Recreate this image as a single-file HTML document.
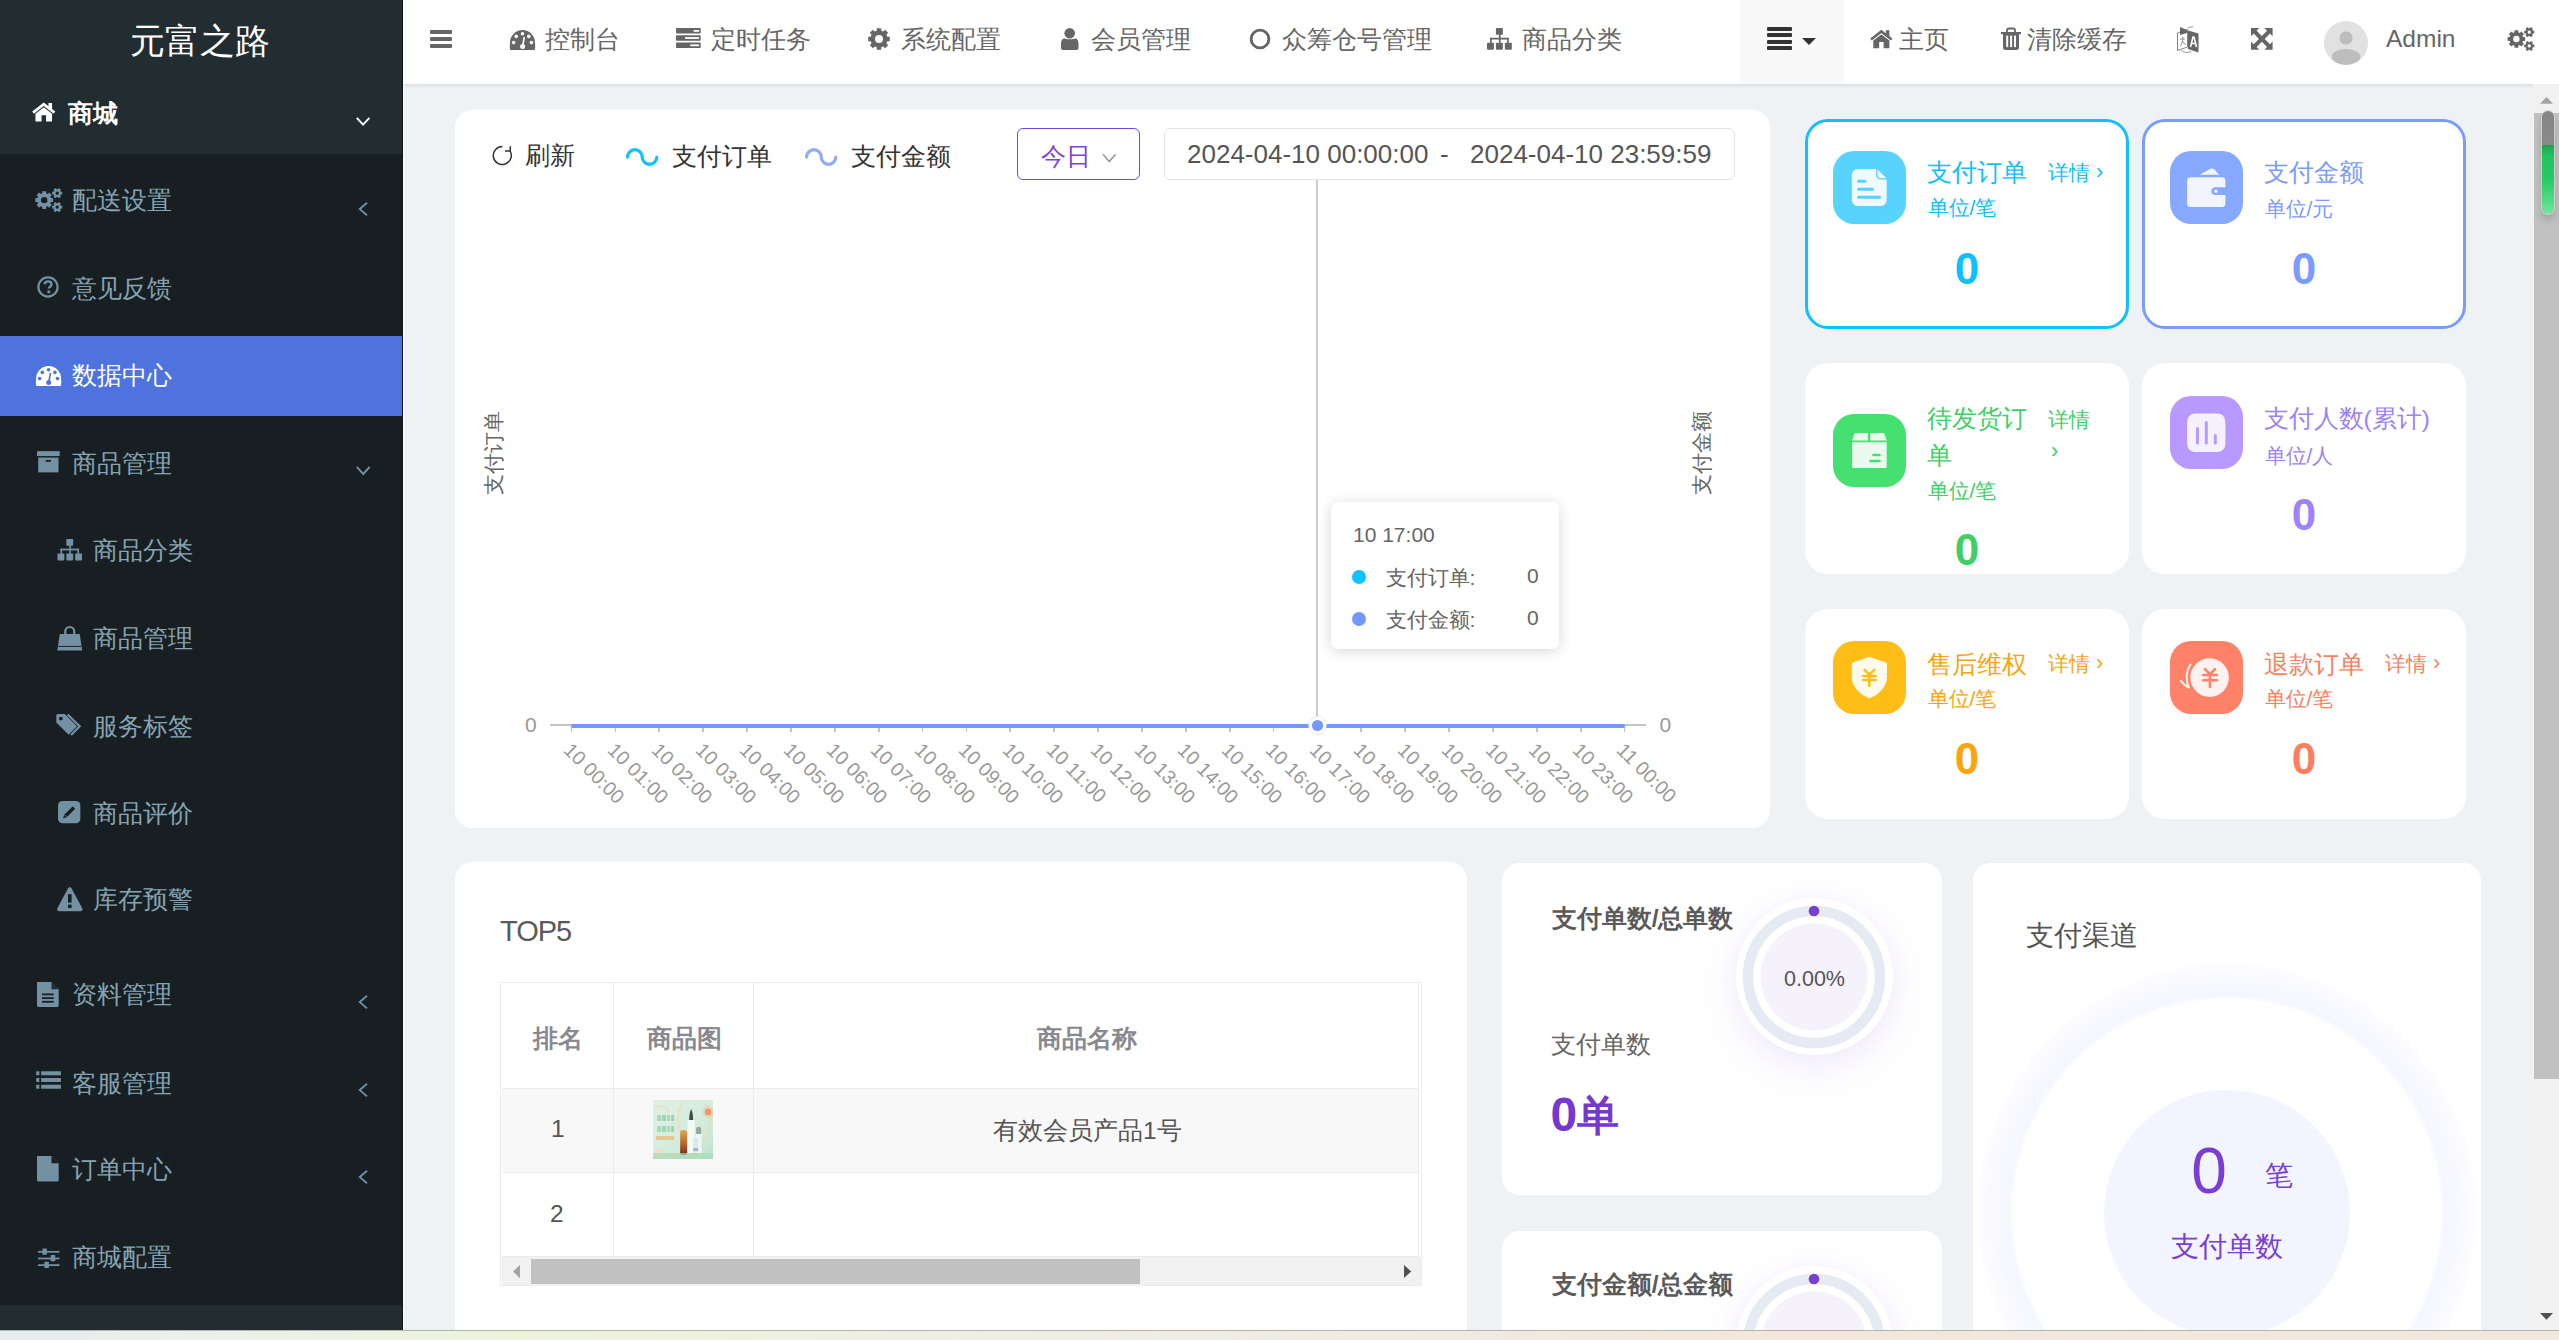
<!DOCTYPE html>
<html><head><meta charset="utf-8">
<style>
*{box-sizing:border-box;margin:0;padding:0}
html,body{width:2559px;height:1340px;overflow:hidden;background:#eef2f5;font-family:"Liberation Sans",sans-serif;position:relative}
.a{position:absolute}
.t{position:absolute;white-space:nowrap;line-height:1}
svg{position:absolute;display:block;overflow:visible}
.card{position:absolute;background:#fff}
</style></head><body>
<div class="a" style="left:0px;top:0px;width:402px;height:1330px;background:#181f23;"></div>
<div class="a" style="left:0px;top:0px;width:402px;height:154px;background:#222d32;"></div>
<div class="a" style="left:0px;top:1305px;width:402px;height:25px;background:#222d32;"></div>
<div class="a" style="left:402px;top:0px;width:1px;height:1330px;background:#0e1416;"></div>
<div class="a" style="left:403px;top:84px;width:1px;height:1246px;background:#fbfcfd;"></div>
<div class="a" style="left:0px;top:336px;width:402px;height:80px;background:#4e73df;"></div>
<div class="t" style="left:130px;top:23px;font-size:35px;color:#fff;font-weight:normal;">元富之路</div>
<div class="t" style="left:67.5px;top:102px;font-size:24.5px;color:#fff;font-weight:bold;">商城</div>
<div class="t" style="left:72.0px;top:189.2px;font-size:24.5px;color:#86a3b2;font-weight:normal;">配送设置</div>
<div class="t" style="left:72.0px;top:276.7px;font-size:24.5px;color:#86a3b2;font-weight:normal;">意见反馈</div>
<div class="t" style="left:72.0px;top:364.2px;font-size:24.5px;color:#fff;font-weight:normal;">数据中心</div>
<div class="t" style="left:72.0px;top:451.7px;font-size:24.5px;color:#86a3b2;font-weight:normal;">商品管理</div>
<div class="t" style="left:93.0px;top:539.2px;font-size:24.5px;color:#86a3b2;font-weight:normal;">商品分类</div>
<div class="t" style="left:93.0px;top:626.7px;font-size:24.5px;color:#86a3b2;font-weight:normal;">商品管理</div>
<div class="t" style="left:93.0px;top:714.7px;font-size:24.5px;color:#86a3b2;font-weight:normal;">服务标签</div>
<div class="t" style="left:93.0px;top:801.7px;font-size:24.5px;color:#86a3b2;font-weight:normal;">商品评价</div>
<div class="t" style="left:93.0px;top:888.2px;font-size:24.5px;color:#86a3b2;font-weight:normal;">库存预警</div>
<div class="t" style="left:72.0px;top:982.7px;font-size:24.5px;color:#86a3b2;font-weight:normal;">资料管理</div>
<div class="t" style="left:72.0px;top:1071.7px;font-size:24.5px;color:#86a3b2;font-weight:normal;">客服管理</div>
<div class="t" style="left:72.0px;top:1158.2px;font-size:24.5px;color:#86a3b2;font-weight:normal;">订单中心</div>
<div class="t" style="left:72.0px;top:1246.2px;font-size:24.5px;color:#86a3b2;font-weight:normal;">商城配置</div>
<svg style="left:31.5px;top:102.5px;" width="23.5" height="18.6" viewBox="0 0 22.7 18"><path d="M1 9.3 L11.35 1.2 L21.7 9.3" fill="none" stroke="#fff" stroke-width="2.6" stroke-linejoin="miter"/><rect x="15.9" y="0" width="3.5" height="6.5" fill="#fff"/><path fill="#fff" d="M3.3 10.3 L11.35 4.2 L19.4 10.3 V18 H13.6 V11.9 H9.2 V18 H3.3Z"/></svg>
<svg style="left:34.8px;top:188px;" width="27.4" height="24.4" viewBox="0 0 28 25"><path fill="#7391a3" fill-rule="evenodd" d="M16.31 10.37 L18.50 10.49 L18.50 14.31 L16.31 14.43 L15.72 15.85 L17.19 17.48 L14.48 20.19 L12.85 18.72 L11.43 19.31 L11.31 21.50 L7.49 21.50 L7.37 19.31 L5.95 18.72 L4.32 20.19 L1.61 17.48 L3.08 15.85 L2.49 14.43 L0.30 14.31 L0.30 10.49 L2.49 10.37 L3.08 8.95 L1.61 7.32 L4.32 4.61 L5.95 6.08 L7.37 5.49 L7.49 3.30 L11.31 3.30 L11.43 5.49 L12.85 6.08 L14.48 4.61 L17.19 7.32 L15.72 8.95ZM12.70 12.40A3.30 3.30 0 1 0 6.10 12.40A3.30 3.30 0 1 0 12.70 12.40Z"/><path fill="#7391a3" fill-rule="evenodd" d="M26.45 3.90 L27.92 3.91 L27.92 6.69 L26.45 6.70 L25.78 7.85 L26.51 9.13 L24.11 10.51 L23.36 9.24 L22.04 9.24 L21.29 10.51 L18.89 9.13 L19.62 7.85 L18.95 6.70 L17.48 6.69 L17.48 3.91 L18.95 3.90 L19.62 2.75 L18.89 1.47 L21.29 0.09 L22.04 1.36 L23.36 1.36 L24.11 0.09 L26.51 1.47 L25.78 2.75ZM24.40 5.30A1.70 1.70 0 1 0 21.00 5.30A1.70 1.70 0 1 0 24.40 5.30Z"/><path fill="#7391a3" fill-rule="evenodd" d="M26.45 18.20 L27.92 18.21 L27.92 20.99 L26.45 21.00 L25.78 22.15 L26.51 23.43 L24.11 24.81 L23.36 23.54 L22.04 23.54 L21.29 24.81 L18.89 23.43 L19.62 22.15 L18.95 21.00 L17.48 20.99 L17.48 18.21 L18.95 18.20 L19.62 17.05 L18.89 15.77 L21.29 14.39 L22.04 15.66 L23.36 15.66 L24.11 14.39 L26.51 15.77 L25.78 17.05ZM24.40 19.60A1.70 1.70 0 1 0 21.00 19.60A1.70 1.70 0 1 0 24.40 19.60Z"/></svg>
<svg style="left:37.2px;top:276px;" width="22" height="22" viewBox="0 0 22 22"><circle cx="11" cy="11" r="9.6" fill="none" stroke="#7391a3" stroke-width="2.2"/><path d="M7.6 8.4 C7.8 6.4 9.2 5.4 11.1 5.4 C13.1 5.4 14.5 6.6 14.5 8.3 C14.5 10.6 11.9 10.8 11.9 12.6" fill="none" stroke="#7391a3" stroke-width="2.4"/><rect x="10.4" y="14.4" width="2.8" height="2.8" fill="#7391a3"/></svg>
<svg style="left:35.8px;top:366px;" width="25.2" height="20" viewBox="0 0 25 20"><path fill="#fff" d="M0.3 20 C-0.6 17.5 0 14 0 12.5 A12.5 12.5 0 0 1 25 12.5 C25 14 25.6 17.5 24.7 20Z"/><circle cx="12.5" cy="3.8" r="1.8" fill="#4e73df"/><circle cx="6.2" cy="6.4" r="1.8" fill="#4e73df"/><circle cx="18.8" cy="6.4" r="1.8" fill="#4e73df"/><circle cx="3.6" cy="12.6" r="1.8" fill="#4e73df"/><circle cx="21.4" cy="12.6" r="1.8" fill="#4e73df"/><path d="M14.3 7 L12.9 15" stroke="#4e73df" stroke-width="1.6"/><circle cx="12.6" cy="16.4" r="2.5" fill="#4e73df"/></svg>
<svg style="left:36.7px;top:451px;" width="22.7" height="21.5" viewBox="0 0 23 21.5"><rect x="0" y="0" width="23" height="5" fill="#7391a3"/><rect x="1.2" y="6.5" width="20.6" height="15" fill="#7391a3"/><rect x="8.8" y="9" width="5.4" height="1.8" fill="#181f23"/></svg>
<svg style="left:56.5px;top:539.4px;" width="25.5" height="21.4" viewBox="0 0 25 21.8"><rect x="9" y="0" width="7" height="6.8" rx="0.8" fill="#7391a3"/><rect x="12" y="6" width="1.7" height="9" fill="#7391a3"/><rect x="3" y="9.8" width="19" height="1.8" fill="#7391a3"/><rect x="3" y="10" width="1.7" height="5" fill="#7391a3"/><rect x="20.3" y="10" width="1.7" height="5" fill="#7391a3"/><rect x="0" y="14.8" width="7" height="7" rx="0.8" fill="#7391a3"/><rect x="9" y="14.8" width="7" height="7" rx="0.8" fill="#7391a3"/><rect x="18" y="14.8" width="7" height="7" rx="0.8" fill="#7391a3"/></svg>
<svg style="left:56.5px;top:624.6px;" width="25.5" height="25.4" viewBox="0 0 25 25.5"><path d="M8 10 V6.5 A4.5 4.5 0 0 1 17 6.5 V10" fill="none" stroke="#7391a3" stroke-width="2.2"/><path fill="#7391a3" d="M2.5 9 H22.5 L25 25.5 H0Z"/><path d="M1 21.5 H24" stroke="#1a2226" stroke-width="1"/></svg>
<svg style="left:55.8px;top:714px;" width="26.8" height="21.7" viewBox="0 0 26.5 22"><path fill="#7391a3" d="M0 1.2 V8.5 L12.5 21 L21 12.5 L8.5 0 H1.2Z"/><circle cx="4.6" cy="4.6" r="1.9" fill="#181f23"/><path d="M11.5 0.5 L23.7 12.5 L15 21.2" fill="none" stroke="#7391a3" stroke-width="2.2"/></svg>
<svg style="left:57.9px;top:800.7px;" width="22.4" height="22.3" viewBox="0 0 22.4 22.4"><rect x="0" y="0" width="22.4" height="22.4" rx="4.5" fill="#7391a3"/><path d="M5 17.5 L6.2 13.8 L14.8 5.2 L17.3 7.7 L8.7 16.3Z" fill="#181f23"/><path d="M6.8 14.2 L8.3 15.7" stroke="#7391a3" stroke-width="0.9"/></svg>
<svg style="left:56.5px;top:887px;" width="25.6" height="24.3" viewBox="0 0 25.6 24"><path fill="#7391a3" d="M12.8 0 C13.6 0 14.1 0.5 14.5 1.2 L25.4 21.4 C25.9 22.6 25.2 24 23.8 24 H1.8 C0.4 24 -0.3 22.6 0.2 21.4 L11.1 1.2 C11.5 0.5 12 0 12.8 0Z"/><rect x="11" y="7" width="3.6" height="8.5" fill="#181f23"/><rect x="11" y="17.5" width="3.6" height="3.4" fill="#181f23"/></svg>
<svg style="left:37.2px;top:981.5px;" width="21.7" height="25" viewBox="0 0 21.7 25"><path fill="#7391a3" d="M1 0 H14.5 L21.7 7.2 V23.6 C21.7 24.4 21.1 25 20.3 25 H1.4 C0.6 25 0 24.4 0 23.6 V1 C0 0.4 0.4 0 1 0Z"/><path fill="#181f23" d="M14.5 0 V7.2 H21.7Z" opacity="0.9"/><rect x="5" y="11.5" width="11.7" height="1.8" fill="#181f23"/><rect x="5" y="15.2" width="11.7" height="1.8" fill="#181f23"/><rect x="5" y="18.9" width="11.7" height="1.8" fill="#181f23"/></svg>
<svg style="left:35.8px;top:1071px;" width="25.2" height="20.3" viewBox="0 0 25 20.5"><rect x="0" y="0.3" width="3.2" height="4" fill="#7391a3"/><rect x="5" y="0.3" width="20" height="4" fill="#7391a3"/><rect x="0" y="7.1" width="3.2" height="4" fill="#7391a3"/><rect x="5" y="7.1" width="20" height="4" fill="#7391a3"/><rect x="0" y="13.9" width="3.2" height="4" fill="#7391a3"/><rect x="5" y="13.9" width="20" height="4" fill="#7391a3"/><rect x="0" y="3.1" width="3.2" height="0.8" fill="#7391a3" opacity="0"/></svg>
<svg style="left:37.2px;top:1156px;" width="21.7" height="25.5" viewBox="0 0 21.7 25.4"><path fill="#7391a3" d="M1 0 H14.5 L21.7 7.2 V24 C21.7 24.8 21.1 25.4 20.3 25.4 H1.4 C0.6 25.4 0 24.8 0 24 V1 C0 0.4 0.4 0 1 0Z"/><path fill="#181f23" d="M14.5 0 V7.2 H21.7Z"/></svg>
<svg style="left:37.5px;top:1247.6px;" width="21.5" height="20.4" viewBox="0 0 22 20"><rect x="0" y="2.6" width="22" height="1.8" fill="#7391a3"/><rect x="0" y="9.4" width="22" height="1.8" fill="#7391a3"/><rect x="0" y="16.2" width="22" height="1.8" fill="#7391a3"/><rect x="4.5" y="0" width="4.6" height="6.4" rx="0.6" fill="#7391a3"/><rect x="13" y="6.8" width="4.6" height="6.4" rx="0.6" fill="#7391a3"/><rect x="6.5" y="13.6" width="4.6" height="6.4" rx="0.6" fill="#7391a3"/></svg>
<svg style="left:354.8px;top:115.5px;" width="16.2" height="10.5" viewBox="-1 -1 16.2 10.5"><path d="M0.8 0.8 L7.1 7.7 L13.399999999999999 0.8" fill="none" stroke="#fff" stroke-width="1.9"/></svg>
<svg style="left:355px;top:465px;" width="16.5" height="10.8" viewBox="-1 -1 16.5 10.8"><path d="M0.8 0.8 L7.25 8.0 L13.7 0.8" fill="none" stroke="#7391a3" stroke-width="1.9"/></svg>
<svg style="left:358.2px;top:200.8px;" width="10.8" height="16.2" viewBox="-1 -1 10.8 16.2"><path d="M8.0 0.8 L0.8 7.1 L8.0 13.399999999999999" fill="none" stroke="#7391a3" stroke-width="1.9"/></svg>
<svg style="left:358.2px;top:994px;" width="10.8" height="16.2" viewBox="-1 -1 10.8 16.2"><path d="M8.0 0.8 L0.8 7.1 L8.0 13.399999999999999" fill="none" stroke="#7391a3" stroke-width="1.9"/></svg>
<svg style="left:358.2px;top:1082.2px;" width="10.8" height="16.2" viewBox="-1 -1 10.8 16.2"><path d="M8.0 0.8 L0.8 7.1 L8.0 13.399999999999999" fill="none" stroke="#7391a3" stroke-width="1.9"/></svg>
<svg style="left:358.2px;top:1169px;" width="10.8" height="16.2" viewBox="-1 -1 10.8 16.2"><path d="M8.0 0.8 L0.8 7.1 L8.0 13.399999999999999" fill="none" stroke="#7391a3" stroke-width="1.9"/></svg>
<div class="a" style="left:403px;top:0;width:2156px;height:84px;background:#fff;box-shadow:0 1px 4px rgba(0,0,0,.13)"></div>
<div class="a" style="left:1740px;top:0px;width:104px;height:84px;background:#f8f8f8;"></div>
<div class="t" style="left:545px;top:28px;font-size:24.5px;color:#666;font-weight:normal;">控制台</div>
<div class="t" style="left:711px;top:28px;font-size:24.5px;color:#666;font-weight:normal;">定时任务</div>
<div class="t" style="left:901px;top:28px;font-size:24.5px;color:#666;font-weight:normal;">系统配置</div>
<div class="t" style="left:1091px;top:28px;font-size:24.5px;color:#666;font-weight:normal;">会员管理</div>
<div class="t" style="left:1282px;top:28px;font-size:24.5px;color:#666;font-weight:normal;">众筹仓号管理</div>
<div class="t" style="left:1522px;top:28px;font-size:24.5px;color:#666;font-weight:normal;">商品分类</div>
<div class="t" style="left:1899px;top:28px;font-size:24.5px;color:#666;font-weight:normal;">主页</div>
<div class="t" style="left:2027px;top:28px;font-size:24.5px;color:#666;font-weight:normal;">清除缓存</div>
<div class="t" style="left:2386px;top:27px;font-size:24.5px;color:#666;font-weight:normal;">Admin</div>
<div class="a" style="left:430px;top:30px;width:22px;height:4px;background:#666;border-radius:1px"></div>
<div class="a" style="left:430px;top:37px;width:22px;height:4px;background:#666;border-radius:1px"></div>
<div class="a" style="left:430px;top:44px;width:22px;height:4px;background:#666;border-radius:1px"></div>
<svg style="left:510px;top:30px;" width="25" height="20" viewBox="0 0 25 20"><path fill="#666" d="M0.3 20 C-0.6 17.5 0 14 0 12.5 A12.5 12.5 0 0 1 25 12.5 C25 14 25.6 17.5 24.7 20Z"/><circle cx="12.5" cy="3.8" r="1.8" fill="#fff"/><circle cx="6.2" cy="6.4" r="1.8" fill="#fff"/><circle cx="18.8" cy="6.4" r="1.8" fill="#fff"/><circle cx="3.6" cy="12.6" r="1.8" fill="#fff"/><circle cx="21.4" cy="12.6" r="1.8" fill="#fff"/><path d="M14.3 7 L12.9 15" stroke="#fff" stroke-width="1.6"/><circle cx="12.6" cy="16.4" r="2.5" fill="#fff"/></svg>
<svg style="left:676px;top:28px;" width="24.7" height="20" viewBox="0 0 24.7 20"><rect x="0" y="0" width="24.7" height="5.6" rx="0.8" fill="#666"/><rect x="17.7" y="2" width="5.4" height="1.8" fill="#fff"/><rect x="0" y="7.2" width="24.7" height="5.6" rx="0.8" fill="#666"/><rect x="9" y="9.1" width="14.1" height="1.8" fill="#fff"/><rect x="0" y="14.4" width="24.7" height="5.6" rx="0.8" fill="#666"/><rect x="14.3" y="16.4" width="8.8" height="1.8" fill="#fff"/></svg>
<svg style="left:868px;top:28px;" width="22" height="22" viewBox="0 0 22 22"><path fill="#666" fill-rule="evenodd" d="M19.29 8.72 L21.79 8.87 L21.79 13.13 L19.29 13.28 L18.47 15.26 L20.14 17.13 L17.13 20.14 L15.26 18.47 L13.28 19.29 L13.13 21.79 L8.87 21.79 L8.72 19.29 L6.74 18.47 L4.87 20.14 L1.86 17.13 L3.53 15.26 L2.71 13.28 L0.21 13.13 L0.21 8.87 L2.71 8.72 L3.53 6.74 L1.86 4.87 L4.87 1.86 L6.74 3.53 L8.72 2.71 L8.87 0.21 L13.13 0.21 L13.28 2.71 L15.26 3.53 L17.13 1.86 L20.14 4.87 L18.47 6.74ZM15.00 11.00A4.00 4.00 0 1 0 7.00 11.00A4.00 4.00 0 1 0 15.00 11.00Z"/></svg>
<svg style="left:1061px;top:28px;" width="17.5" height="22" viewBox="0 0 17.5 22"><circle cx="8.7" cy="5.3" r="5.3" fill="#666"/><path fill="#666" d="M3.2 10.2 C5 11.6 12.5 11.6 14.3 10.2 C16.6 10.6 17.5 13 17.5 16 V20 C17.5 21.2 16.7 22 15.5 22 H2 C0.8 22 0 21.2 0 20 V16 C0 13 0.9 10.6 3.2 10.2Z"/></svg>
<svg style="left:1249px;top:28px;" width="22" height="22" viewBox="0 0 22 22"><circle cx="11" cy="11" r="8.9" fill="none" stroke="#666" stroke-width="2.9"/></svg>
<svg style="left:1487.2px;top:28.2px;" width="24.8" height="21.7" viewBox="0 0 25 21.8"><rect x="9" y="0" width="7" height="6.8" rx="0.8" fill="#666"/><rect x="12" y="6" width="1.7" height="9" fill="#666"/><rect x="3" y="9.8" width="19" height="1.8" fill="#666"/><rect x="3" y="10" width="1.7" height="5" fill="#666"/><rect x="20.3" y="10" width="1.7" height="5" fill="#666"/><rect x="0" y="14.8" width="7" height="7" rx="0.8" fill="#666"/><rect x="9" y="14.8" width="7" height="7" rx="0.8" fill="#666"/><rect x="18" y="14.8" width="7" height="7" rx="0.8" fill="#666"/></svg>
<div class="a" style="left:1766.8px;top:27px;width:25.2px;height:4px;background:#333;border-radius:1px"></div>
<div class="a" style="left:1766.8px;top:33.3px;width:25.2px;height:4px;background:#333;border-radius:1px"></div>
<div class="a" style="left:1766.8px;top:39.6px;width:25.2px;height:4px;background:#333;border-radius:1px"></div>
<div class="a" style="left:1766.8px;top:45.9px;width:25.2px;height:4px;background:#333;border-radius:1px"></div>
<svg style="left:1802px;top:38px;" width="14" height="7" viewBox="0 0 14 7"><path d="M0 0 H14 L7 7Z" fill="#333"/></svg>
<svg style="left:1870px;top:29.5px;" width="22.7" height="18.4" viewBox="0 0 22.7 18"><path d="M1 9.3 L11.35 1.2 L21.7 9.3" fill="none" stroke="#666" stroke-width="2.6" stroke-linejoin="miter"/><rect x="15.9" y="0" width="3.5" height="6.5" fill="#666"/><path fill="#666" d="M3.3 10.3 L11.35 4.2 L19.4 10.3 V18 H13.6 V11.9 H9.2 V18 H3.3Z"/></svg>
<svg style="left:2000.6px;top:28px;" width="20" height="22" viewBox="0 0 20 22"><path d="M6 4 V2.2 C6 1.2 6.8 0.5 7.8 0.5 H12.2 C13.2 0.5 14 1.2 14 2.2 V4" fill="none" stroke="#666" stroke-width="1.8"/><rect x="0" y="4" width="20" height="2.2" fill="#666"/><path fill="#666" d="M2 6 H18 V19.5 C18 21 17 22 15.5 22 H4.5 C3 22 2 21 2 19.5Z"/><rect x="5.2" y="7.6" width="2" height="11.5" fill="#fff"/><rect x="9.1" y="7.6" width="2" height="11.5" fill="#fff"/><rect x="13" y="7.6" width="2" height="11.5" fill="#fff"/></svg>
<svg style="left:2177px;top:26px;" width="22" height="26" viewBox="0 0 22 26"><path d="M0.5 7 L10.5 3.5 V21 L0.5 24.5Z" fill="none" stroke="#666" stroke-width="0.8"/><path d="M3 1 L10 4 L10 7 L3 9Z" fill="#666"/><path d="M11 4.5 L21.5 7.5 V26.5 L11 23Z" fill="#666"/><path d="M13.5 21 L16 11 H17 L19.5 21 M14.6 17.5 H18.4" stroke="#fff" stroke-width="1.6" fill="none"/><path d="M3 13 H8 M6 11 C6 15 5 18 3 20 M5 15 C6 17 8 18 9 18.5" stroke="#666" stroke-width="0.7" fill="none"/><path d="M4.5 24.5 C7 27 12 27 14 25" stroke="#666" stroke-width="0.7" fill="none"/><path d="M11 2 C13 1 15 0.8 16.5 1" stroke="#666" stroke-width="0.7" fill="none"/></svg>
<svg style="left:2251px;top:28.2px;" width="21.6" height="21.8" viewBox="0 0 21.6 21.8"><path fill="#666" d="M0 0 H8.3 L5.6 2.7 L10.8 7.9 L16 2.7 L13.3 0 H21.6 V8.3 L18.9 5.6 L13.7 10.9 L18.9 16.2 L21.6 13.5 V21.8 H13.3 L16 19.1 L10.8 13.8 L5.6 19.1 L8.3 21.8 H0 V13.5 L2.7 16.2 L7.9 10.9 L2.7 5.6 L0 8.3Z"/></svg>
<svg style="left:2324px;top:20.5px;" width="44" height="44" viewBox="0 0 44 44"><defs><clipPath id="avc"><circle cx="22" cy="22" r="22"/></clipPath></defs><circle cx="22" cy="22" r="22" fill="#e1e1e1"/><circle cx="22" cy="17" r="6.6" fill="#bdbdbd"/><ellipse cx="22" cy="36" rx="14.3" ry="8" fill="#bdbdbd" clip-path="url(#avc)"/></svg>
<svg style="left:2507px;top:27px;" width="27.7" height="24.2" viewBox="0 0 28 25"><path fill="#666" fill-rule="evenodd" d="M16.31 10.37 L18.50 10.49 L18.50 14.31 L16.31 14.43 L15.72 15.85 L17.19 17.48 L14.48 20.19 L12.85 18.72 L11.43 19.31 L11.31 21.50 L7.49 21.50 L7.37 19.31 L5.95 18.72 L4.32 20.19 L1.61 17.48 L3.08 15.85 L2.49 14.43 L0.30 14.31 L0.30 10.49 L2.49 10.37 L3.08 8.95 L1.61 7.32 L4.32 4.61 L5.95 6.08 L7.37 5.49 L7.49 3.30 L11.31 3.30 L11.43 5.49 L12.85 6.08 L14.48 4.61 L17.19 7.32 L15.72 8.95ZM12.70 12.40A3.30 3.30 0 1 0 6.10 12.40A3.30 3.30 0 1 0 12.70 12.40Z"/><path fill="#666" fill-rule="evenodd" d="M26.45 3.90 L27.92 3.91 L27.92 6.69 L26.45 6.70 L25.78 7.85 L26.51 9.13 L24.11 10.51 L23.36 9.24 L22.04 9.24 L21.29 10.51 L18.89 9.13 L19.62 7.85 L18.95 6.70 L17.48 6.69 L17.48 3.91 L18.95 3.90 L19.62 2.75 L18.89 1.47 L21.29 0.09 L22.04 1.36 L23.36 1.36 L24.11 0.09 L26.51 1.47 L25.78 2.75ZM24.40 5.30A1.70 1.70 0 1 0 21.00 5.30A1.70 1.70 0 1 0 24.40 5.30Z"/><path fill="#666" fill-rule="evenodd" d="M26.45 18.20 L27.92 18.21 L27.92 20.99 L26.45 21.00 L25.78 22.15 L26.51 23.43 L24.11 24.81 L23.36 23.54 L22.04 23.54 L21.29 24.81 L18.89 23.43 L19.62 22.15 L18.95 21.00 L17.48 20.99 L17.48 18.21 L18.95 18.20 L19.62 17.05 L18.89 15.77 L21.29 14.39 L22.04 15.66 L23.36 15.66 L24.11 14.39 L26.51 15.77 L25.78 17.05ZM24.40 19.60A1.70 1.70 0 1 0 21.00 19.60A1.70 1.70 0 1 0 24.40 19.60Z"/></svg>
<div class="card" style="left:455px;top:110px;width:1315px;height:718px;border-radius:18px"></div>
<svg style="left:492.9px;top:145.5px;" width="20" height="20" viewBox="0 0 20 20"><path d="M9.3 0.5 A9 9 0 1 0 17.1 5" fill="none" stroke="#333" stroke-width="1.5"/><path d="M12 5.1 H17.3 V0.3" fill="none" stroke="#333" stroke-width="1.5"/></svg>
<div class="t" style="left:525px;top:143.5px;font-size:24.5px;color:#333;font-weight:normal;">刷新</div>
<svg style="left:625.7px;top:147px;" width="32.5" height="19" viewBox="0 0 32.5 19"><path d="M1.6 10 A7.3 7.3 0 0 1 16.2 10 A7.3 7.3 0 0 0 30.8 10" fill="none" stroke="#0fc3ff" stroke-width="3.2" stroke-linecap="round"/></svg>
<div class="t" style="left:672px;top:144.5px;font-size:24.5px;color:#333;font-weight:normal;">支付订单</div>
<svg style="left:805px;top:147px;" width="32.5" height="19" viewBox="0 0 32.5 19"><path d="M1.6 10 A7.3 7.3 0 0 1 16.2 10 A7.3 7.3 0 0 0 30.8 10" fill="none" stroke="#8eaaff" stroke-width="3.2" stroke-linecap="round"/></svg>
<div class="t" style="left:851.4px;top:144.5px;font-size:24.5px;color:#333;font-weight:normal;">支付金额</div>
<div class="a" style="left:1017px;top:128px;width:123px;height:52px;border:1.6px solid #7b45d6;border-radius:6px;background:#fff"></div>
<div class="t" style="left:1040.6px;top:145px;font-size:24.5px;color:#7b45d6;font-weight:normal;">今日</div>
<svg style="left:1101.6px;top:152.5px;" width="14.5" height="10" viewBox="0 0 14.5 10"><path d="M1 1.2 L7.25 8.5 L13.5 1.2" fill="none" stroke="#999" stroke-width="1.6"/></svg>
<div class="a" style="left:1164px;top:128px;width:571px;height:52px;border:1.6px solid #e1e3ea;border-radius:6px;background:#fff"></div>
<div class="t" style="left:1187px;top:140.7px;font-size:26px;color:#555;font-weight:normal;">2024-04-10 00:00:00</div>
<div class="t" style="left:1440px;top:140.7px;font-size:26px;color:#555;font-weight:normal;">-</div>
<div class="t" style="left:1470px;top:140.7px;font-size:26px;color:#555;font-weight:normal;">2024-04-10 23:59:59</div>
<div class="t" style="left:493px;top:453px;font-size:21px;color:#666;transform:translate(-50%,-50%) rotate(-90deg)">支付订单</div>
<div class="t" style="left:1701px;top:453px;font-size:21px;color:#666;transform:translate(-50%,-50%) rotate(-90deg)">支付金额</div>
<div class="t" style="left:525px;top:713.5px;font-size:21px;color:#999;font-weight:normal;">0</div>
<div class="t" style="left:1659.5px;top:713.5px;font-size:21px;color:#999;font-weight:normal;">0</div>
<div class="a" style="left:1316.2px;top:180px;width:1.8px;height:545px;background:#cccccc;"></div>
<div class="a" style="left:550px;top:724px;width:1096px;height:1.8px;background:#c4c4c4;"></div>
<div class="a" style="left:570.7px;top:725px;width:1.8px;height:7px;background:#c4c4c4;"></div>
<div class="t" style="left:567.1px;top:737px;font-size:19.5px;color:#999;transform-origin:0 50%;transform:rotate(45deg)">10 00:00</div>
<div class="a" style="left:614.575px;top:725px;width:1.8px;height:7px;background:#c4c4c4;"></div>
<div class="t" style="left:611.0px;top:737px;font-size:19.5px;color:#999;transform-origin:0 50%;transform:rotate(45deg)">10 01:00</div>
<div class="a" style="left:658.45px;top:725px;width:1.8px;height:7px;background:#c4c4c4;"></div>
<div class="t" style="left:654.9px;top:737px;font-size:19.5px;color:#999;transform-origin:0 50%;transform:rotate(45deg)">10 02:00</div>
<div class="a" style="left:702.325px;top:725px;width:1.8px;height:7px;background:#c4c4c4;"></div>
<div class="t" style="left:698.7px;top:737px;font-size:19.5px;color:#999;transform-origin:0 50%;transform:rotate(45deg)">10 03:00</div>
<div class="a" style="left:746.2px;top:725px;width:1.8px;height:7px;background:#c4c4c4;"></div>
<div class="t" style="left:742.6px;top:737px;font-size:19.5px;color:#999;transform-origin:0 50%;transform:rotate(45deg)">10 04:00</div>
<div class="a" style="left:790.075px;top:725px;width:1.8px;height:7px;background:#c4c4c4;"></div>
<div class="t" style="left:786.5px;top:737px;font-size:19.5px;color:#999;transform-origin:0 50%;transform:rotate(45deg)">10 05:00</div>
<div class="a" style="left:833.95px;top:725px;width:1.8px;height:7px;background:#c4c4c4;"></div>
<div class="t" style="left:830.4px;top:737px;font-size:19.5px;color:#999;transform-origin:0 50%;transform:rotate(45deg)">10 06:00</div>
<div class="a" style="left:877.825px;top:725px;width:1.8px;height:7px;background:#c4c4c4;"></div>
<div class="t" style="left:874.2px;top:737px;font-size:19.5px;color:#999;transform-origin:0 50%;transform:rotate(45deg)">10 07:00</div>
<div class="a" style="left:921.7px;top:725px;width:1.8px;height:7px;background:#c4c4c4;"></div>
<div class="t" style="left:918.1px;top:737px;font-size:19.5px;color:#999;transform-origin:0 50%;transform:rotate(45deg)">10 08:00</div>
<div class="a" style="left:965.575px;top:725px;width:1.8px;height:7px;background:#c4c4c4;"></div>
<div class="t" style="left:962.0px;top:737px;font-size:19.5px;color:#999;transform-origin:0 50%;transform:rotate(45deg)">10 09:00</div>
<div class="a" style="left:1009.45px;top:725px;width:1.8px;height:7px;background:#c4c4c4;"></div>
<div class="t" style="left:1005.9px;top:737px;font-size:19.5px;color:#999;transform-origin:0 50%;transform:rotate(45deg)">10 10:00</div>
<div class="a" style="left:1053.3249999999998px;top:725px;width:1.8px;height:7px;background:#c4c4c4;"></div>
<div class="t" style="left:1049.7px;top:737px;font-size:19.5px;color:#999;transform-origin:0 50%;transform:rotate(45deg)">10 11:00</div>
<div class="a" style="left:1097.1999999999998px;top:725px;width:1.8px;height:7px;background:#c4c4c4;"></div>
<div class="t" style="left:1093.6px;top:737px;font-size:19.5px;color:#999;transform-origin:0 50%;transform:rotate(45deg)">10 12:00</div>
<div class="a" style="left:1141.0749999999998px;top:725px;width:1.8px;height:7px;background:#c4c4c4;"></div>
<div class="t" style="left:1137.5px;top:737px;font-size:19.5px;color:#999;transform-origin:0 50%;transform:rotate(45deg)">10 13:00</div>
<div class="a" style="left:1184.9499999999998px;top:725px;width:1.8px;height:7px;background:#c4c4c4;"></div>
<div class="t" style="left:1181.3px;top:737px;font-size:19.5px;color:#999;transform-origin:0 50%;transform:rotate(45deg)">10 14:00</div>
<div class="a" style="left:1228.8249999999998px;top:725px;width:1.8px;height:7px;background:#c4c4c4;"></div>
<div class="t" style="left:1225.2px;top:737px;font-size:19.5px;color:#999;transform-origin:0 50%;transform:rotate(45deg)">10 15:00</div>
<div class="a" style="left:1272.6999999999998px;top:725px;width:1.8px;height:7px;background:#c4c4c4;"></div>
<div class="t" style="left:1269.1px;top:737px;font-size:19.5px;color:#999;transform-origin:0 50%;transform:rotate(45deg)">10 16:00</div>
<div class="a" style="left:1316.5749999999998px;top:725px;width:1.8px;height:7px;background:#c4c4c4;"></div>
<div class="t" style="left:1313.0px;top:737px;font-size:19.5px;color:#999;transform-origin:0 50%;transform:rotate(45deg)">10 17:00</div>
<div class="a" style="left:1360.4499999999998px;top:725px;width:1.8px;height:7px;background:#c4c4c4;"></div>
<div class="t" style="left:1356.8px;top:737px;font-size:19.5px;color:#999;transform-origin:0 50%;transform:rotate(45deg)">10 18:00</div>
<div class="a" style="left:1404.3249999999998px;top:725px;width:1.8px;height:7px;background:#c4c4c4;"></div>
<div class="t" style="left:1400.7px;top:737px;font-size:19.5px;color:#999;transform-origin:0 50%;transform:rotate(45deg)">10 19:00</div>
<div class="a" style="left:1448.1999999999998px;top:725px;width:1.8px;height:7px;background:#c4c4c4;"></div>
<div class="t" style="left:1444.6px;top:737px;font-size:19.5px;color:#999;transform-origin:0 50%;transform:rotate(45deg)">10 20:00</div>
<div class="a" style="left:1492.0749999999998px;top:725px;width:1.8px;height:7px;background:#c4c4c4;"></div>
<div class="t" style="left:1488.5px;top:737px;font-size:19.5px;color:#999;transform-origin:0 50%;transform:rotate(45deg)">10 21:00</div>
<div class="a" style="left:1535.9499999999998px;top:725px;width:1.8px;height:7px;background:#c4c4c4;"></div>
<div class="t" style="left:1532.3px;top:737px;font-size:19.5px;color:#999;transform-origin:0 50%;transform:rotate(45deg)">10 22:00</div>
<div class="a" style="left:1579.8249999999998px;top:725px;width:1.8px;height:7px;background:#c4c4c4;"></div>
<div class="t" style="left:1576.2px;top:737px;font-size:19.5px;color:#999;transform-origin:0 50%;transform:rotate(45deg)">10 23:00</div>
<div class="a" style="left:1623.6999999999998px;top:725px;width:1.8px;height:7px;background:#c4c4c4;"></div>
<div class="t" style="left:1620.1px;top:737px;font-size:19.5px;color:#999;transform-origin:0 50%;transform:rotate(45deg)">11 00:00</div>
<div class="a" style="left:570.5px;top:723.5px;width:1054px;height:4px;background:#7398ff;border-radius:2px"></div>
<svg style="left:1305px;top:713px;" width="25" height="25" viewBox="0 0 25 25"><circle cx="12.5" cy="12.5" r="9.2" fill="#e8e8e8"/><circle cx="12.5" cy="12.5" r="8.4" fill="#fff"/><circle cx="12.5" cy="12.5" r="5.6" fill="#7398ff"/></svg>
<div class="a" style="left:1331px;top:502px;width:228px;height:147px;background:#fff;border-radius:7px;box-shadow:0 2px 14px rgba(0,0,0,.16)"></div>
<div class="t" style="left:1353px;top:524px;font-size:21px;color:#666;font-weight:normal;">10 17:00</div>
<svg style="left:1352px;top:570px;" width="14" height="14" viewBox="0 0 14 14"><circle cx="7" cy="7" r="7" fill="#0fc3ff"/></svg>
<svg style="left:1352px;top:611.7px;" width="14" height="14" viewBox="0 0 14 14"><circle cx="7" cy="7" r="7" fill="#7398ff"/></svg>
<div class="t" style="left:1385.5px;top:567px;font-size:21px;color:#666;font-weight:normal;">支付订单:</div>
<div class="t" style="left:1385.5px;top:608.7px;font-size:21px;color:#666;font-weight:normal;">支付金额:</div>
<div class="t" style="left:1527px;top:565px;font-size:21px;color:#666;font-weight:normal;">0</div>
<div class="t" style="left:1527px;top:606.8px;font-size:21px;color:#666;font-weight:normal;">0</div>
<div class="card" style="left:1805px;top:119px;width:324px;height:210px;border-radius:23px;border:3px solid #0cc1fd;"></div>
<svg style="left:1833px;top:151px" width="73" height="73" viewBox="0 0 73 73"><rect width="73" height="73" rx="21" fill="#57d3fe"/><path d="M25 18 H43 L53.7 28.7 V49 C53.7 52.3 51 55 47.7 55 H24.8 C21.5 55 18.8 52.3 18.8 49 V24.2 C18.8 20.8 21.5 18 25 18Z" fill="#effaff"/><path d="M43 18 V24 C43 26.5 45 28.5 47.5 28.5 H53.7Z" fill="#57d3fe" opacity="0.9"/><path d="M44.6 18.5 L53.2 27.1 H48 C46 27.1 44.6 25.7 44.6 23.7Z" fill="#effaff"/><path d="M25.6 30.2 H32 M25.6 38.3 H39.6 M25.6 46.3 H46.6" stroke="#57d3fe" stroke-width="3" stroke-linecap="round"/></svg>
<div class="t" style="left:1926.5px;top:161.3px;font-size:24.5px;color:#0cc1fd;font-weight:normal;">支付订单</div>
<div class="t" style="left:2048px;top:162px;font-size:21px;color:#0cc1fd;font-weight:normal;">详情<span style="font-family:Liberation Sans;font-size:22px;position:relative;top:-1px"> ›</span></div>
<div class="t" style="left:1927.5px;top:197px;font-size:21px;color:#0cc1fd;font-weight:normal;">单位/笔</div>
<div class="t" style="left:1805px;top:246.6px;width:324px;text-align:center;font-size:44px;font-weight:bold;color:#0cc1fd">0</div>
<div class="card" style="left:2142px;top:119px;width:324px;height:210px;border-radius:23px;border:3px solid #7b9bff;"></div>
<svg style="left:2170px;top:151px" width="73" height="73" viewBox="0 0 73 73"><rect width="73" height="73" rx="21" fill="#86a9ff"/><path d="M29.5 23.8 L40 18 C42 17 44 17.6 45.2 19.2 L49 23.8Z" fill="#f2f5ff"/><path d="M20.2 26.2 H52.4 C54 26.2 55.4 27.6 55.4 29.2 V36.3 H45.2 C43 36.3 41.3 38 41.3 40.2 C41.3 42.3 43 44 45.2 44 H55.4 V53 C55.4 54.6 54 56 52.4 56 H20.2 C18.5 56 17.1 54.6 17.1 53 V29.2 C17.1 27.6 18.5 26.2 20.2 26.2Z" fill="#f2f5ff"/><circle cx="46" cy="40.3" r="1.7" fill="#f2f5ff"/></svg>
<div class="t" style="left:2263.5px;top:161.3px;font-size:24.5px;color:#7b9bff;font-weight:normal;">支付金额</div>
<div class="t" style="left:2264.5px;top:198px;font-size:21px;color:#7b9bff;font-weight:normal;">单位/元</div>
<div class="t" style="left:2142px;top:246.6px;width:324px;text-align:center;font-size:44px;font-weight:bold;color:#7b9bff">0</div>
<div class="card" style="left:1805px;top:363px;width:324px;height:211px;border-radius:23px;"></div>
<svg style="left:1833px;top:414px" width="73" height="73" viewBox="0 0 73 73"><rect width="73" height="73" rx="21" fill="#46e070"/><path d="M22.5 19.1 H34.9 V26.5 H19.1 L21 21 C21.3 20 21.8 19.1 22.5 19.1Z" fill="#eafaef"/><path d="M37.3 19.1 H50.2 C51 19.1 51.5 20 51.8 21 L53.7 26.5 H37.3Z" fill="#eafaef"/><path d="M19.1 28.2 H53.7 V52.5 C53.7 53.3 53 54 52.2 54 H20.6 C19.8 54 19.1 53.3 19.1 52.5Z" fill="#eafaef"/><path d="M40.5 41 H46.5 M37.5 47 H46.5" stroke="#46e070" stroke-width="2.7" stroke-linecap="round"/></svg>
<div class="t" style="left:1926.5px;top:406.6px;font-size:24.5px;color:#3fcf65;font-weight:normal;">待发货订</div>
<div class="t" style="left:1926.5px;top:444.1px;font-size:24.5px;color:#3fcf65;font-weight:normal;">单</div>
<div class="t" style="left:2048px;top:408.6px;font-size:21px;color:#3fcf65;font-weight:normal;">详情</div>
<div class="t" style="left:2051px;top:439.6px;font-size:22px;color:#3fcf65;font-weight:normal;">›</div>
<div class="t" style="left:1927.5px;top:479.7px;font-size:21px;color:#3fcf65;font-weight:normal;">单位/笔</div>
<div class="t" style="left:1805px;top:527.7px;width:324px;text-align:center;font-size:44px;font-weight:bold;color:#3fcf65">0</div>
<div class="card" style="left:2142px;top:363px;width:324px;height:211px;border-radius:23px;"></div>
<svg style="left:2170px;top:396px" width="73" height="73" viewBox="0 0 73 73"><rect width="73" height="73" rx="21" fill="#b899ff"/><rect x="17.1" y="17.5" width="38.3" height="38.5" rx="8" fill="#f5f1ff"/><path d="M27.5 32.5 V47 M36.3 26.5 V47 M45.3 39.5 V47" stroke="#b899ff" stroke-width="3" stroke-linecap="round"/></svg>
<div class="t" style="left:2263.5px;top:406.6px;font-size:24.5px;color:#9d82fa;font-weight:normal;">支付人数(累计)</div>
<div class="t" style="left:2264.5px;top:444.6px;font-size:21px;color:#9d82fa;font-weight:normal;">单位/人</div>
<div class="t" style="left:2142px;top:492.5px;width:324px;text-align:center;font-size:44px;font-weight:bold;color:#9d82fa">0</div>
<div class="card" style="left:1805px;top:609px;width:324px;height:210px;border-radius:23px;"></div>
<svg style="left:1833px;top:641px" width="73" height="73" viewBox="0 0 73 73"><rect width="73" height="73" rx="21" fill="#ffbd16"/><path d="M36.3 15.8 L52.8 21.5 C53.6 21.8 54 22.5 54 23.3 V36 C54 47 44 54.5 36.3 57.4 C28.6 54.5 18.8 47 18.8 36 V23.3 C18.8 22.5 19.2 21.8 20 21.5Z" fill="#fffbec"/><path d="M31.6 28.9 L36.3 33.6 L41.3 28.9 M30.2 34.9 H42.6 M30.2 39 H42.6 M36.3 33.6 V45" stroke="#ffbd16" stroke-width="2.5" fill="none" stroke-linecap="round"/></svg>
<div class="t" style="left:1926.5px;top:652.6px;font-size:24.5px;color:#fca40d;font-weight:normal;">售后维权</div>
<div class="t" style="left:2048px;top:653px;font-size:21px;color:#fca40d;font-weight:normal;">详情<span style="font-family:Liberation Sans;font-size:22px;position:relative;top:-1px"> ›</span></div>
<div class="t" style="left:1927.5px;top:688.2px;font-size:21px;color:#fca40d;font-weight:normal;">单位/笔</div>
<div class="t" style="left:1805px;top:737px;width:324px;text-align:center;font-size:44px;font-weight:bold;color:#fca40d">0</div>
<div class="card" style="left:2142px;top:609px;width:324px;height:210px;border-radius:23px;"></div>
<svg style="left:2170px;top:641px" width="73" height="73" viewBox="0 0 73 73"><rect width="73" height="73" rx="21" fill="#ff8168"/><circle cx="39.6" cy="36.6" r="19.3" fill="#fff2ef"/><path d="M34.9 28.2 L39.9 33.2 L45 28.2 M33.2 33.9 H47 M33.2 39.3 H47 M39.9 33.2 V46" stroke="#ff8168" stroke-width="2.5" fill="none" stroke-linecap="round"/><path d="M20.5 23.5 C16 30 15.5 39 18.8 46.3" stroke="#fff2ef" stroke-width="2" fill="none" stroke-linecap="round"/><path d="M10.8 39.8 C13.5 43 16 45 18.8 46.5" stroke="#fff2ef" stroke-width="2" fill="none" stroke-linecap="round"/></svg>
<div class="t" style="left:2263.5px;top:652.6px;font-size:24.5px;color:#fb7e62;font-weight:normal;">退款订单</div>
<div class="t" style="left:2385px;top:653px;font-size:21px;color:#fb7e62;font-weight:normal;">详情<span style="font-family:Liberation Sans;font-size:22px;position:relative;top:-1px"> ›</span></div>
<div class="t" style="left:2264.5px;top:688.2px;font-size:21px;color:#fb7e62;font-weight:normal;">单位/笔</div>
<div class="t" style="left:2142px;top:737px;width:324px;text-align:center;font-size:44px;font-weight:bold;color:#fb7e62">0</div>
<div class="card" style="left:455px;top:862px;width:1012px;height:520px;border-radius:18px"></div>
<div class="t" style="left:500px;top:916.5px;font-size:29px;color:#5a5a5a;font-weight:normal;letter-spacing:-1px">TOP5</div>
<div class="a" style="left:500px;top:982px;width:922px;height:304px;border:1.5px solid #e9ecf3;background:#fff"></div>
<div class="a" style="left:501.5px;top:1088.5px;width:917px;height:84.5px;background:#f8f8f8;"></div>
<div class="a" style="left:501.5px;top:1088px;width:917px;height:1px;background:#e8ebf3;"></div>
<div class="a" style="left:501.5px;top:1172px;width:917px;height:1px;background:#e8ebf3;"></div>
<div class="a" style="left:501.5px;top:1256px;width:917px;height:1px;background:#e8ebf3;"></div>
<div class="a" style="left:613px;top:983px;width:1px;height:273px;background:#e8ebf3;"></div>
<div class="a" style="left:752.5px;top:983px;width:1px;height:273px;background:#e8ebf3;"></div>
<div class="a" style="left:1418px;top:983px;width:1px;height:273px;background:#e8ebf3;"></div>
<div class="t" style="left:533px;top:1026.5px;font-size:24.5px;color:#888890;font-weight:bold;">排名</div>
<div class="t" style="left:646.5px;top:1026.5px;font-size:24.5px;color:#888890;font-weight:bold;">商品图</div>
<div class="t" style="left:1036.7px;top:1026.5px;font-size:24.5px;color:#888890;font-weight:bold;">商品名称</div>
<div class="t" style="left:551px;top:1117px;font-size:24.5px;color:#555;font-weight:normal;">1</div>
<div class="t" style="left:550px;top:1202px;font-size:24.5px;color:#555;font-weight:normal;">2</div>
<div class="t" style="left:993px;top:1118.5px;font-size:24.5px;color:#555;font-weight:normal;">有效会员产品1号</div>
<svg style="left:652.8px;top:1100px;overflow:hidden" width="60.3" height="59" viewBox="0 0 60 59"><defs><linearGradient id="pg" x1="0" y1="0" x2="1" y2="1"><stop offset="0" stop-color="#dff1e6"/><stop offset="0.6" stop-color="#d2ecdc"/><stop offset="1" stop-color="#bfe3cc"/></linearGradient><linearGradient id="pb" x1="0" y1="0" x2="0" y2="1"><stop offset="0" stop-color="#e2a850"/><stop offset="0.6" stop-color="#b0602a"/><stop offset="1" stop-color="#6e2e1a"/></linearGradient></defs><rect width="60" height="59" fill="url(#pg)"/><path d="M30 2 C22 12 24 30 32 40" stroke="#f1dcc0" stroke-width="1.6" fill="none"/><path d="M52 4 C60 14 58 30 50 42" stroke="#efd8b8" stroke-width="1.6" fill="none"/><path d="M2 8 C6 4 12 6 16 12" stroke="#f3dcc0" stroke-width="1.4" fill="none"/><rect x="4" y="15" width="4" height="6" fill="#a8d9b8"/><rect x="9" y="15" width="4" height="6" fill="#9fd6b2"/><rect x="14" y="15" width="3" height="6" fill="#a8d9b8"/><rect x="18" y="15" width="3" height="6" fill="#9fd6b2"/><rect x="4" y="26" width="4" height="6" fill="#a8d9b8"/><rect x="9" y="26" width="4" height="6" fill="#9fd6b2"/><rect x="14" y="26" width="3" height="6" fill="#a8d9b8"/><rect x="18" y="26" width="3" height="6" fill="#9fd6b2"/><rect x="3" y="36" width="18" height="4" fill="#e9c592"/><circle cx="6" cy="53" r="5" fill="#efdcc0" opacity=".8"/><circle cx="20" cy="56" r="4" fill="#efdcc0" opacity=".8"/><path d="M38 9 C36.5 12 36 16 36 21 H40 C40 16 39.5 12 38 9Z" fill="#3f4d45"/><rect x="34.5" y="20" width="7" height="33" fill="#f1faf4"/><rect x="27" y="30" width="7" height="25" rx="2.5" fill="url(#pb)"/><rect x="43" y="27" width="5" height="8" rx="1.5" fill="#9aa3a0"/><rect x="42.5" y="34" width="6" height="19" fill="#eef8f2"/><rect x="40" y="38" width="5" height="14" fill="#dfe6f0"/><rect x="40" y="48" width="5" height="3" fill="#9fb4de"/><circle cx="55" cy="12" r="3.2" fill="#f0785a"/><circle cx="55" cy="12" r="5.5" fill="#f2b88a" opacity=".45"/><rect x="0" y="53" width="60" height="6" fill="#a6d9b5" opacity=".7"/></svg>
<div class="a" style="left:501.5px;top:1256.5px;width:919px;height:28.7px;background:#f1f1f1;"></div>
<div class="a" style="left:531px;top:1259px;width:609px;height:24.7px;background:#c1c1c1;"></div>
<svg style="left:512.9px;top:1264.9px;" width="7" height="13.2" viewBox="0 0 7 13.2"><path d="M7 0 V13.2 L0 6.6Z" fill="#a3a3a3"/></svg>
<svg style="left:1404px;top:1265.2px;" width="7.2" height="13.1" viewBox="0 0 7.2 13.1"><path d="M0 0 V13.1 L7.2 6.55Z" fill="#505050"/></svg>
<div class="card" style="left:1502px;top:862.7px;width:440px;height:332px;border-radius:18px;overflow:hidden"><div class="a" style="left:233.49999999999991px;top:35.400000000000006px;width:157.2px;height:157.2px;border-radius:50%;background:#fff;box-shadow:0 14px 36px 4px rgba(150,110,225,.10),0 0 22px rgba(150,120,220,.05)"></div><svg style="left:232.0999999999999px;top:34.0px" width="160" height="160" viewBox="0 0 160 160"><circle cx="80" cy="80" r="66" fill="none" stroke="#e5eaf3" stroke-width="10.5"/><circle cx="80" cy="80" r="53.5" fill="#f5f2fc"/><circle cx="80" cy="14" r="5.3" fill="#7a3fd2"/></svg></div>
<div class="t" style="left:1551.7px;top:907px;font-size:24.5px;color:#5a5a5a;font-weight:bold;">支付单数/总单数</div>
<div class="t" style="left:1784px;top:968.5px;font-size:21.5px;color:#555;font-weight:normal;">0.00%</div>
<div class="t" style="left:1551px;top:1033px;font-size:24.5px;color:#666;font-weight:normal;">支付单数</div>
<div class="t" style="left:1550.5px;top:1090.5px;font-size:48px;color:#7539d0;font-weight:bold;">0</div>
<div class="t" style="left:1577px;top:1094.5px;font-size:41.5px;color:#7539d0;font-weight:bold;">单</div>
<div class="card" style="left:1502px;top:1230.6px;width:440px;height:332px;border-radius:18px;overflow:hidden"><div class="a" style="left:233.49999999999991px;top:35.400000000000006px;width:157.2px;height:157.2px;border-radius:50%;background:#fff;box-shadow:0 14px 36px 4px rgba(150,110,225,.10),0 0 22px rgba(150,120,220,.05)"></div><svg style="left:232.0999999999999px;top:34.0px" width="160" height="160" viewBox="0 0 160 160"><circle cx="80" cy="80" r="66" fill="none" stroke="#e5eaf3" stroke-width="10.5"/><circle cx="80" cy="80" r="53.5" fill="#f5f2fc"/><circle cx="80" cy="14" r="5.3" fill="#7a3fd2"/></svg></div>
<div class="t" style="left:1551.7px;top:1273px;font-size:24.5px;color:#5a5a5a;font-weight:bold;">支付金额/总金额</div>
<div class="card" style="left:1973px;top:862.7px;width:507.5px;height:520px;border-radius:18px;overflow:hidden"><div class="a" style="left:2px;top:98.29999999999995px;width:504px;height:504px;border-radius:50%;background:radial-gradient(circle,#fff 0,#fff 213px,#f5f7fe 218px,#f8f9fe 232px,#fcfcff 246px,rgba(255,255,255,0) 252px)"></div><div class="a" style="left:131.4px;top:227.69999999999996px;width:245.2px;height:245.2px;border-radius:50%;background:#f3f5fe"></div></div>
<div class="t" style="left:2026px;top:922px;font-size:28px;color:#555;font-weight:normal;">支付渠道</div>
<div class="t" style="left:2191.3px;top:1138.5px;font-size:64px;color:#7a3fd2;font-weight:normal;">0</div>
<div class="t" style="left:2264.5px;top:1162px;font-size:28px;color:#7a3fd2;font-weight:normal;">笔</div>
<div class="t" style="left:2170.5px;top:1233px;font-size:28px;color:#7a3fd2;font-weight:normal;">支付单数</div>
<div class="a" style="left:2533px;top:84px;width:26px;height:1246px;background:#f1f1f1;"></div>
<div class="a" style="left:2534px;top:113px;width:25px;height:965.5px;background:#c1c1c1;"></div>
<svg style="left:2540px;top:96.5px;" width="13" height="6.8" viewBox="0 0 13 6.8"><path d="M0 6.8 H13 L6.5 0Z" fill="#a3a3a3"/></svg>
<svg style="left:2540px;top:1313px;" width="13" height="6.8" viewBox="0 0 13 6.8"><path d="M0 0 H13 L6.5 6.8Z" fill="#505050"/></svg>
<div class="a" style="left:2541.5px;top:110.5px;width:12px;height:103px;border-radius:6px;background:linear-gradient(#858585 0,#8a8a8a 33%,#1c9f4e 33%,#20b457 38%,#22c55e 45%,#26c862 65%,#5fdf8e 92%,#74e7a0 100%);box-shadow:0 0 0 1px rgba(210,210,210,.9),0 6px 8px rgba(0,0,0,.18)"></div>
<div class="a" style="left:0;top:1330px;width:2559px;height:10px;background:linear-gradient(90deg,#e9ecef 0%,#edf0e9 10%,#eef4da 20%,#eef0e0 30%,#efede6 45%,#f0ebe3 55%,#f3e7dc 65%,#f2e7dd 100%);border-top:1.5px solid #b5b5b0"></div>
</body></html>
